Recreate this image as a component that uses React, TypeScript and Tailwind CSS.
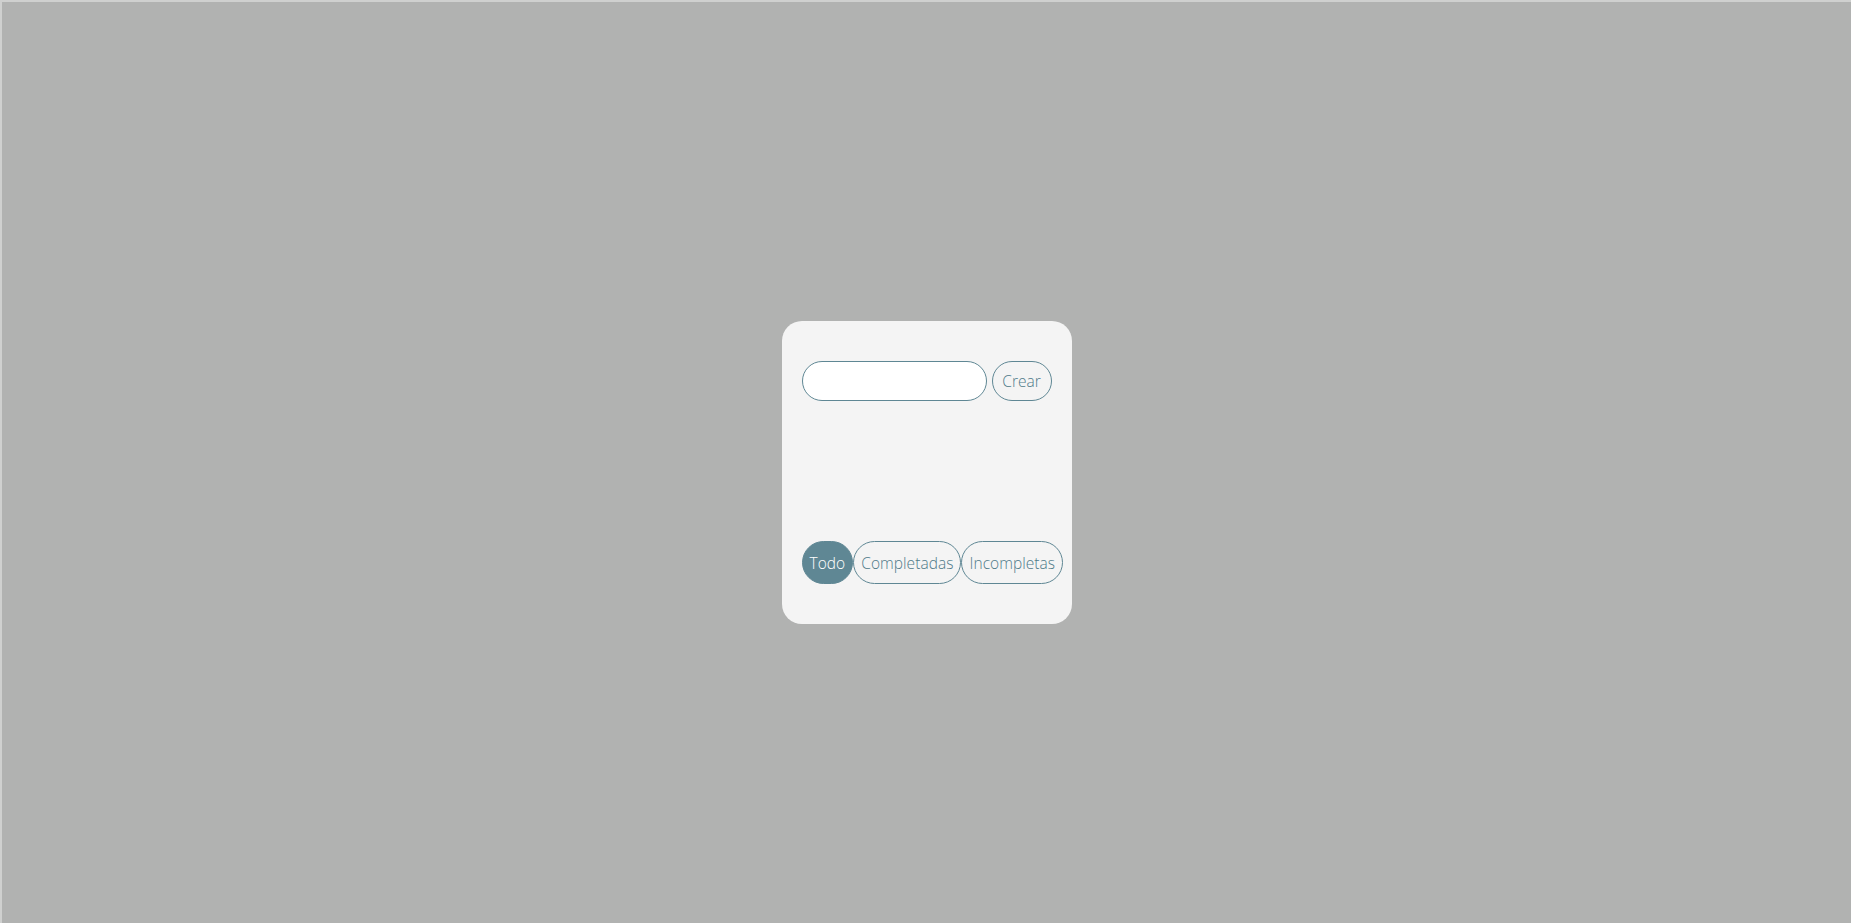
import { useState } from "react";

const filters = ["Todo", "Completadas", "Incompletas"];

export default function App() {
  const [text, setText] = useState("");
  const [filter, setFilter] = useState("Todo");

  return (
    <div className="min-h-[923px] w-full bg-[#b1b2b1] border-t-2 border-l-2 border-[#cfd0cf] flex justify-center items-start pt-[319px] font-['Open_Sans',sans-serif] font-light">
      <div className="w-[290px] h-[303px] bg-[#f4f4f4] rounded-[20px] px-[20px] pt-[40px] flex flex-col">
        {/* Nueva tarea */}
        <form
          className="flex items-center gap-[5px]"
          onSubmit={(e) => {
            e.preventDefault();
            setText("");
          }}
        >
          <input
            value={text}
            onChange={(e) => setText(e.target.value)}
            className="w-[185px] h-[40px] bg-white border border-[#5f8794] rounded-full px-4 text-[15px] text-[#4f7a89] outline-none"
          />
          <button
            type="submit"
            className="w-[60px] h-[40px] border border-[#5f8794] rounded-full text-[15.5px] text-[#4f7a89] pt-[2px]"
          >
            Crear
          </button>
        </form>

        {/* Lista */}
        <div className="h-[140px]" />

        {/* Filtros */}
        <div className="flex items-center whitespace-nowrap">
          {filters.map((f) => (
            <button
              key={f}
              onClick={() => setFilter(f)}
              className={`h-[43px] rounded-full border border-[#5f8794] px-[7px] text-[15.5px] tracking-[0.05px] pt-[2px] ${
                filter === f ? "bg-[#5f8794] text-white" : "text-[#4f7a89]"
              }`}
            >
              {f}
            </button>
          ))}
        </div>
      </div>
    </div>
  );
}
